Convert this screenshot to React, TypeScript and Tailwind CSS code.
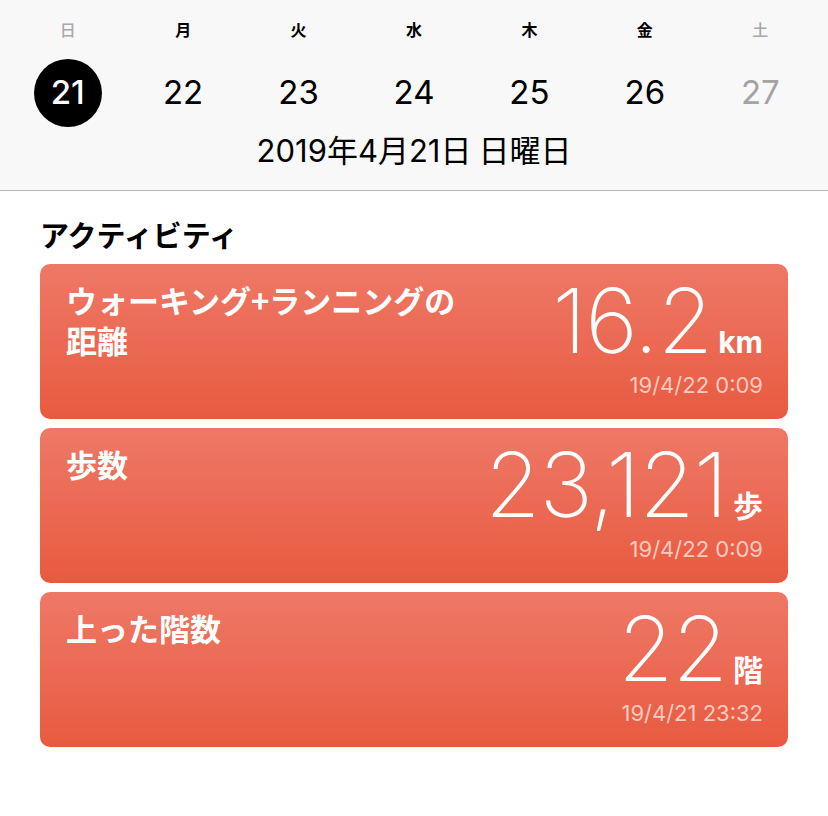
const days = [
  { w: "日", d: "21", muted: true, selected: true },
  { w: "月", d: "22" },
  { w: "火", d: "23" },
  { w: "水", d: "24" },
  { w: "木", d: "25" },
  { w: "金", d: "26" },
  { w: "土", d: "27", muted: true },
];

const cards = [
  { title: "ウォーキング+ランニングの距離", value: "16.2", unit: "km", time: "19/4/22 0:09" },
  { title: "歩数", value: "23,121", unit: "歩", time: "19/4/22 0:09" },
  { title: "上った階数", value: "22", unit: "階", time: "19/4/21 23:32" },
];

const jp = { fontFamily: '"Noto Sans CJK JP", "Noto Sans", sans-serif' };
const num = { fontFamily: 'Inter, "Noto Sans CJK JP", sans-serif' };

export default function App() {
  return (
    <div className="w-[828px] h-[816px] bg-white" style={jp}>
      <div className="bg-[#f8f8f8] border-b border-[#b5b5b5] h-[191px] px-[10px] pt-[16px]">
        <div className="grid grid-cols-7">
          {days.map((x) => (
            <div key={x.w} className="flex flex-col items-center">
              <div className={`text-[16px] leading-[26px] font-bold ${x.muted ? "text-[#a8a8a8] font-medium" : "text-black"}`}>
                {x.w}
              </div>
              <div
                className={`mt-[17px] w-[68px] h-[68px] rounded-full flex items-center justify-center text-[33px] ${
                  x.selected ? "bg-black text-white font-medium" : x.muted ? "text-[#a3a3a3]" : "text-black"
                }`}
                style={num}
              >
                {x.d}
              </div>
            </div>
          ))}
        </div>
        <div className="text-center text-[31px] leading-[40px] text-black mt-[2px]">
          <span style={num}>2019</span>年<span style={num}>4</span>月<span style={num}>21</span>日 日曜日
        </div>
      </div>

      <div className="px-[40px]">
        <div className="text-[29px] font-bold text-black leading-[40px] mt-[23px] mb-[10px]">アクティビティ</div>
        <div className="flex flex-col gap-[9px]">
          {cards.map((c) => (
            <div
              key={c.title}
              className="h-[155px] rounded-[10px] bg-gradient-to-b from-[#ee7866] to-[#e85a40] flex justify-between pl-[26px] pr-[25px]"
            >
              <div className="w-[420px] pt-[16px] text-white text-[31px] font-bold leading-[40px]">{c.title}</div>
              <div className="flex flex-col items-end pt-[17px]">
                <div className="flex items-baseline text-white">
                  <span className="text-[90px] font-extralight leading-[80px] tracking-[-1px]" style={num}>
                    {c.value}
                  </span>
                  <span className="text-[30px] font-bold ml-[6px] leading-none" style={c.unit === "km" ? num : jp}>
                    {c.unit}
                  </span>
                </div>
                <div className="text-[22px] text-[#fccbbf] leading-[28px] mt-[10px]" style={num}>
                  {c.time}
                </div>
              </div>
            </div>
          ))}
        </div>
      </div>
    </div>
  );
}
